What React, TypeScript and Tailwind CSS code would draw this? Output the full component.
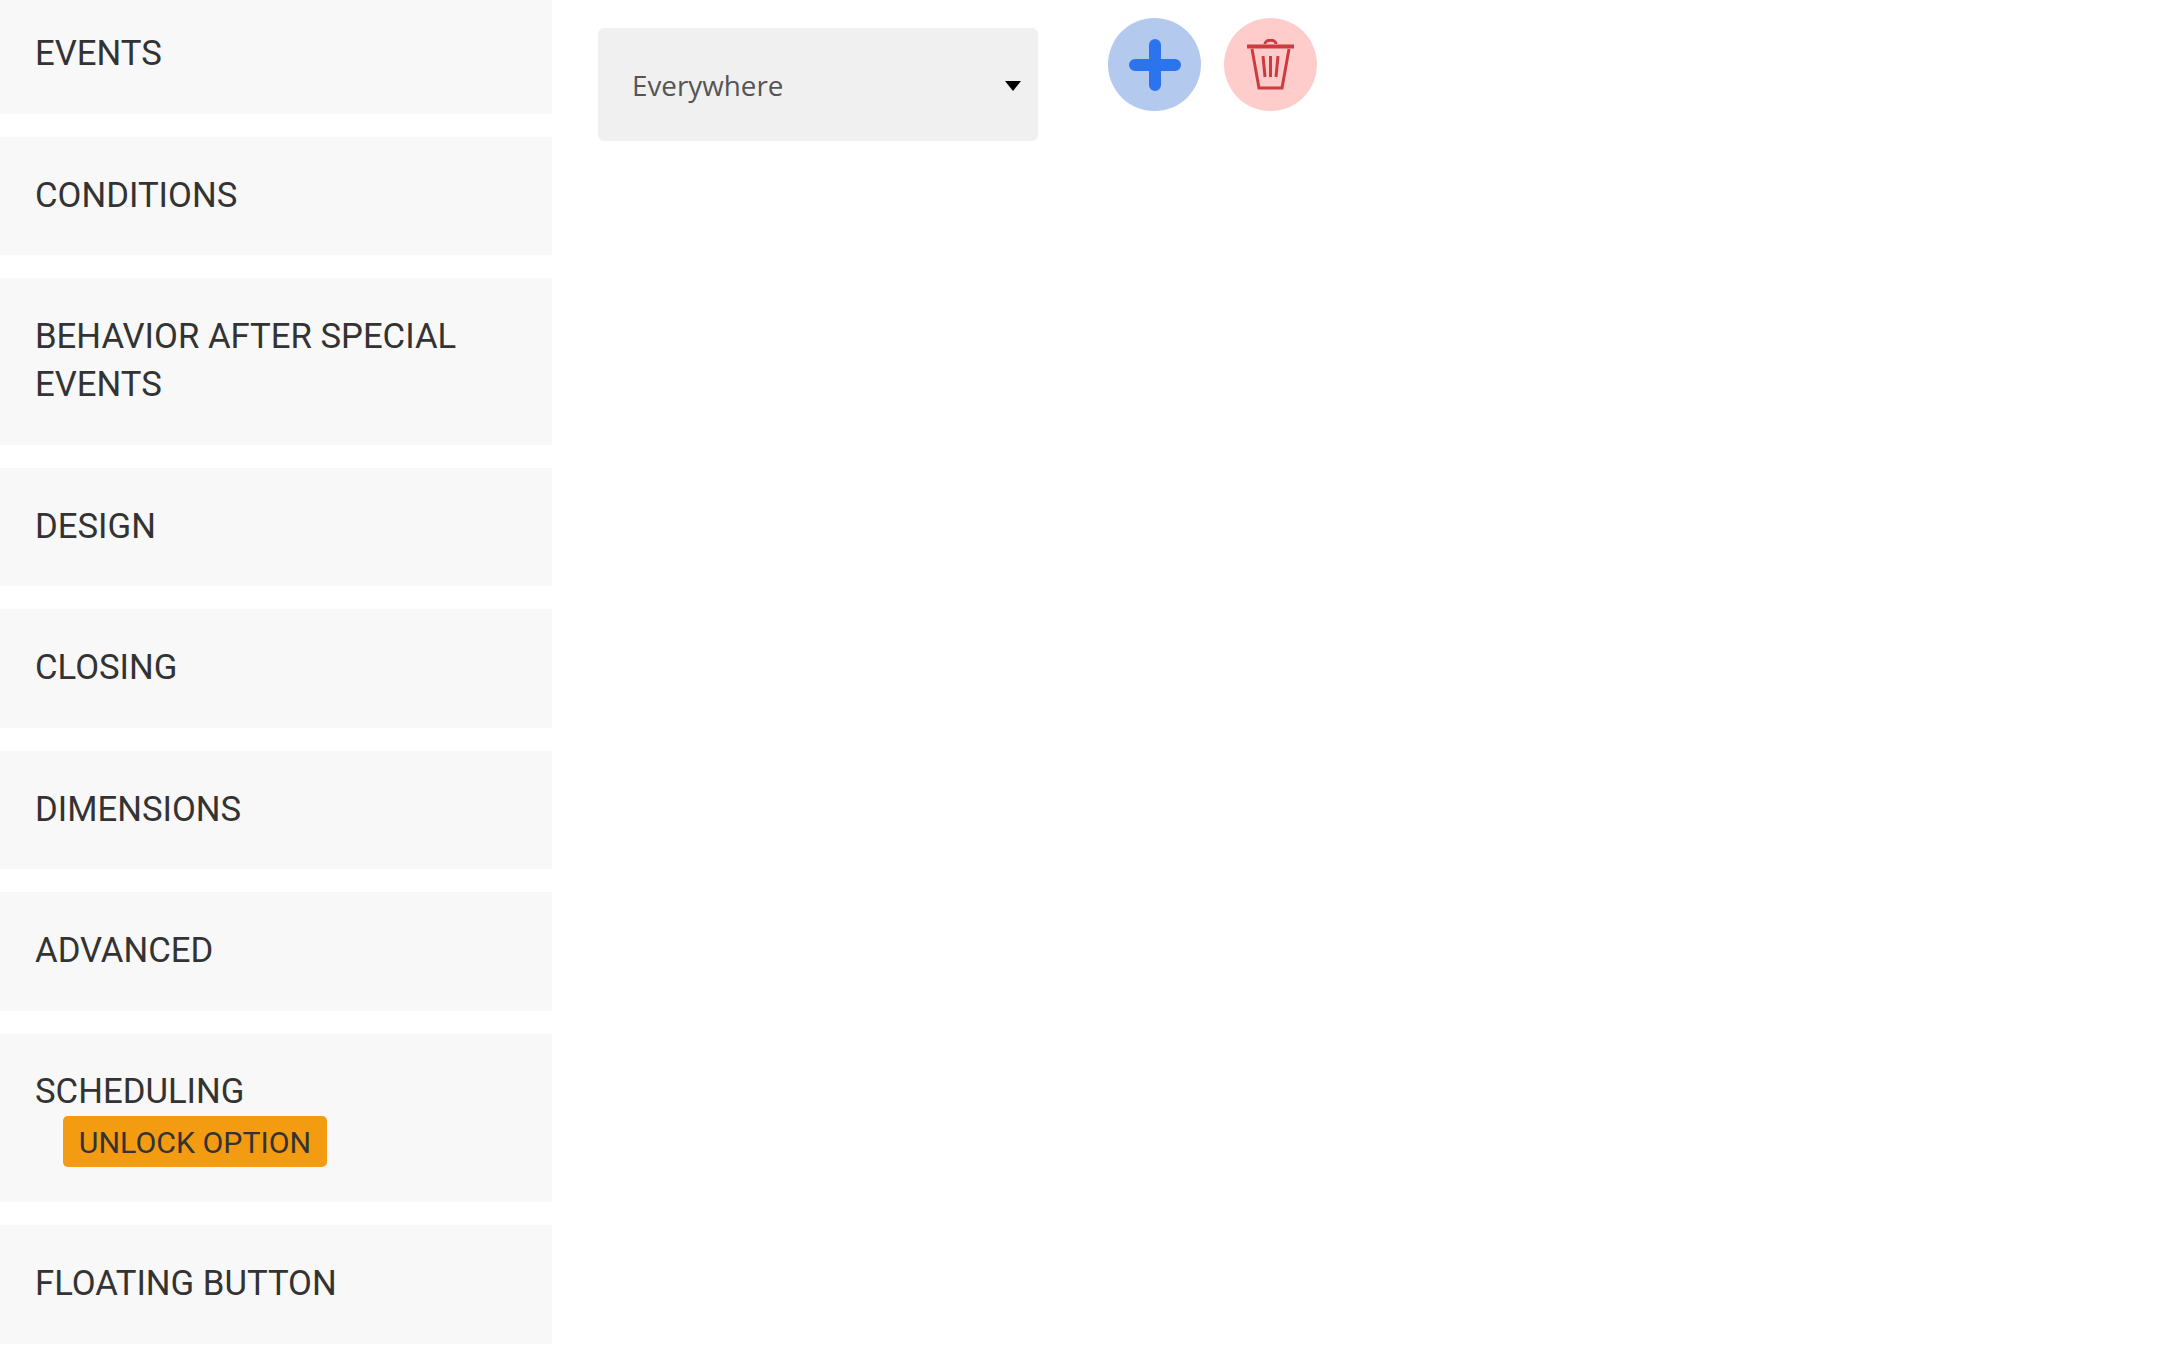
const sections = [
  'EVENTS',
  'CONDITIONS',
  'BEHAVIOR AFTER SPECIAL EVENTS',
  'DESIGN',
  'CLOSING',
  'DIMENSIONS',
  'ADVANCED',
];

function SectionRow({ label }: { label: string }) {
  return (
    <div className="bg-[#f8f8f8] pl-[35px] pr-[60px] pt-[34px] pb-[36.5px] text-[34.7px] leading-[48px] text-[#333] font-['Roboto',sans-serif]">
      {label}
    </div>
  );
}

export default function App() {
  return (
    <div className="h-[1358px] w-[2166px] overflow-hidden bg-white">
      <div className="flex items-start">
        {/* Sidebar */}
        <div className="-mt-[5px] flex w-[552px] shrink-0 flex-col gap-[23px]">
          {sections.map((label) => (
            <SectionRow key={label} label={label} />
          ))}
          <div className="bg-[#f8f8f8] pl-[35px] pt-[33.5px] pb-[35px] text-[34.7px] leading-[48px] text-[#333] font-['Roboto',sans-serif]">
            SCHEDULING
            <div className="ml-[28px] mt-[1px] flex h-[51px] w-[264px] items-center justify-center rounded-[5px] bg-[#f39c12] pt-[4px] text-[30.3px] leading-none">
              UNLOCK OPTION
            </div>
          </div>
          <SectionRow label="FLOATING BUTTON" />
        </div>

        {/* Rule row */}
        <div className="ml-[46px] flex items-start pt-[18px]">
          <div className="relative mt-[10px] flex h-[113px] w-[440px] items-center rounded-[6px] bg-[#f0f0f0] pl-[34px] pt-[3px] font-['Open_Sans',sans-serif] text-[27.8px] text-[#555]">
            Everywhere
            <div className="absolute right-[17px] top-[53px] h-0 w-0 border-x-[8px] border-t-[10px] border-x-transparent border-t-black" />
          </div>
          <button className="ml-[70px] flex h-[93px] w-[93px] items-center justify-center rounded-full bg-[#b3c9ee]">
            <svg width="52" height="52" viewBox="0 0 52 52" fill="none" stroke="#2b74ee" strokeWidth="12" strokeLinecap="round">
              <path d="M26 6v40M6 26h40" />
            </svg>
          </button>
          <button className="ml-[23px] flex h-[93px] w-[93px] items-center justify-center rounded-full bg-[#ffcccc]">
            <svg width="47" height="51" viewBox="0 0 47 51" fill="none" stroke="#cc3b3f" strokeWidth="3">
              <path d="M0 7.5h47" strokeWidth="4" />
              <path d="M18 5c0-5 11-5 11 0" />
              <path d="M5 10l7 39h23l7-39" />
              <path d="M16 17l2 21M23.5 17v21M31 17l-2 21" />
            </svg>
          </button>
        </div>
      </div>
    </div>
  );
}
